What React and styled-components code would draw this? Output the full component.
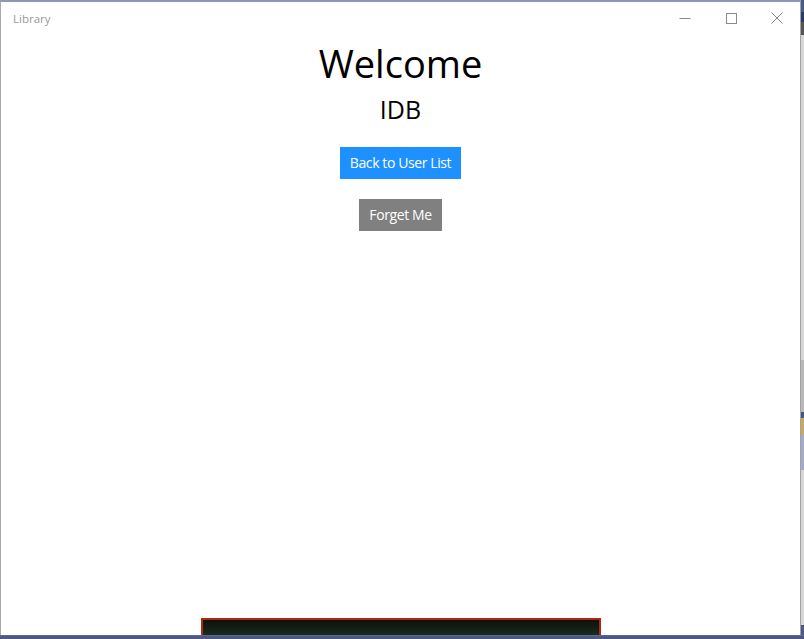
import React from 'react';
import styled, { createGlobalStyle } from 'styled-components';

const GlobalStyle = createGlobalStyle`
  html, body, #root {
    margin: 0;
    padding: 0;
    height: 100%;
  }
  body {
    font-family: 'Open Sans', 'Noto Sans', sans-serif;
    overflow: hidden;
  }
`;

const Desktop = styled.div`
  display: flex;
  flex-direction: column;
  height: 100vh;
  background: #4d5883;
`;

const WindowRow = styled.div`
  flex: 1;
  display: flex;
  min-height: 0;
`;

const Window = styled.div`
  width: 799px;
  display: flex;
  flex-direction: column;
  background: #fff;
  border-top: 2px solid #8e96b8;
  border-left: 1px solid #a9a9a9;
  border-right: 1px solid #a3a3a3;
  overflow: hidden;
`;

const DesktopStrip = styled.div`
  flex: 1;
  background: linear-gradient(
    to bottom,
    #4a5a8a 0px,
    #4a5a8a 12px,
    #2c3a66 12px,
    #2c3a66 22px,
    #555 22px,
    #555 35px,
    #d6d6d6 35px,
    #d6d6d6 360px,
    #b9b9b9 360px,
    #b9b9b9 412px,
    #4a5580 412px,
    #4a5580 418px,
    #c9a862 418px,
    #c9a862 435px,
    #a2a9c9 435px,
    #a2a9c9 470px,
    #d6d6d6 470px,
    #d6d6d6 625px,
    #4d5883 625px
  );
`;

const BottomBand = styled.div`
  height: 4px;
  background: #4d5883;
  border-top: 1px solid #5d6890;
  box-sizing: border-box;
`;

const TitleBar = styled.div`
  height: 32px;
  display: flex;
  align-items: center;
  flex-shrink: 0;
`;

const Title = styled.span`
  flex: 1;
  padding-left: 12px;
  font-family: 'Open Sans', 'Noto Sans', sans-serif;
  font-size: 11.5px;
  color: #9a9a9a;
`;

const CaptionButton = styled.div`
  width: 46px;
  height: 32px;
  display: flex;
  align-items: center;
  justify-content: center;

  svg {
    display: block;
  }
`;

const Content = styled.main`
  flex: 1;
  display: flex;
  flex-direction: column;
  align-items: center;
  padding-top: 10px;
  min-height: 0;
`;

const Heading = styled.h1`
  margin: 0;
  font-family: 'Open Sans', 'Noto Sans', sans-serif;
  font-weight: 400;
  font-size: 38px;
  line-height: 1;
  color: #000;
`;

const UserName = styled.h2`
  margin: 15px 0 0;
  font-family: 'Open Sans', 'Noto Sans', sans-serif;
  font-weight: 400;
  font-size: 25px;
  line-height: 1;
  color: #000;
`;

const Actions = styled.div`
  display: flex;
  flex-direction: column;
  align-items: center;
  gap: 20px;
  margin-top: 25px;
`;

const Button = styled.button`
  height: 32px;
  padding: 0 10px;
  border: none;
  border-radius: 0;
  background: ${(p) => (p.$variant === 'primary' ? '#1e90ff' : '#808080')};
  color: #fff;
  font-family: 'Open Sans', 'Noto Sans', sans-serif;
  font-size: 14px;
  letter-spacing: -0.4px;
  line-height: 32px;
  cursor: pointer;
`;

const Toast = styled.div`
  margin-top: auto;
  width: 400px;
  height: 17px;
  box-sizing: border-box;
  border: 2px solid #b0290f;
  border-bottom: none;
  background: linear-gradient(to bottom, #0b110b, #1c2a1d);
`;

function App() {
  return (
    <>
      <GlobalStyle />
      <Desktop>
        <WindowRow>
          <Window>
            <TitleBar>
              <Title>Library</Title>
              <CaptionButton>
                <svg width="12" height="12" viewBox="0 0 12 12">
                  <path d="M0.5 6.5h11" stroke="#8a8a8a" strokeWidth="1" />
                </svg>
              </CaptionButton>
              <CaptionButton>
                <svg width="12" height="12" viewBox="0 0 12 12">
                  <rect x="1.5" y="1.5" width="10" height="10" fill="none" stroke="#8a8a8a" strokeWidth="1" />
                </svg>
              </CaptionButton>
              <CaptionButton>
                <svg width="12" height="12" viewBox="0 0 12 12">
                  <path d="M0.5 0.5l11 11M11.5 0.5l-11 11" stroke="#8a8a8a" strokeWidth="1" />
                </svg>
              </CaptionButton>
            </TitleBar>
            <Content>
              <Heading>Welcome</Heading>
              <UserName>IDB</UserName>
              <Actions>
                <Button type="button" $variant="primary">
                  Back to User List
                </Button>
                <Button type="button">Forget Me</Button>
              </Actions>
              <Toast />
            </Content>
          </Window>
          <DesktopStrip />
        </WindowRow>
        <BottomBand />
      </Desktop>
    </>
  );
}

export default App;
